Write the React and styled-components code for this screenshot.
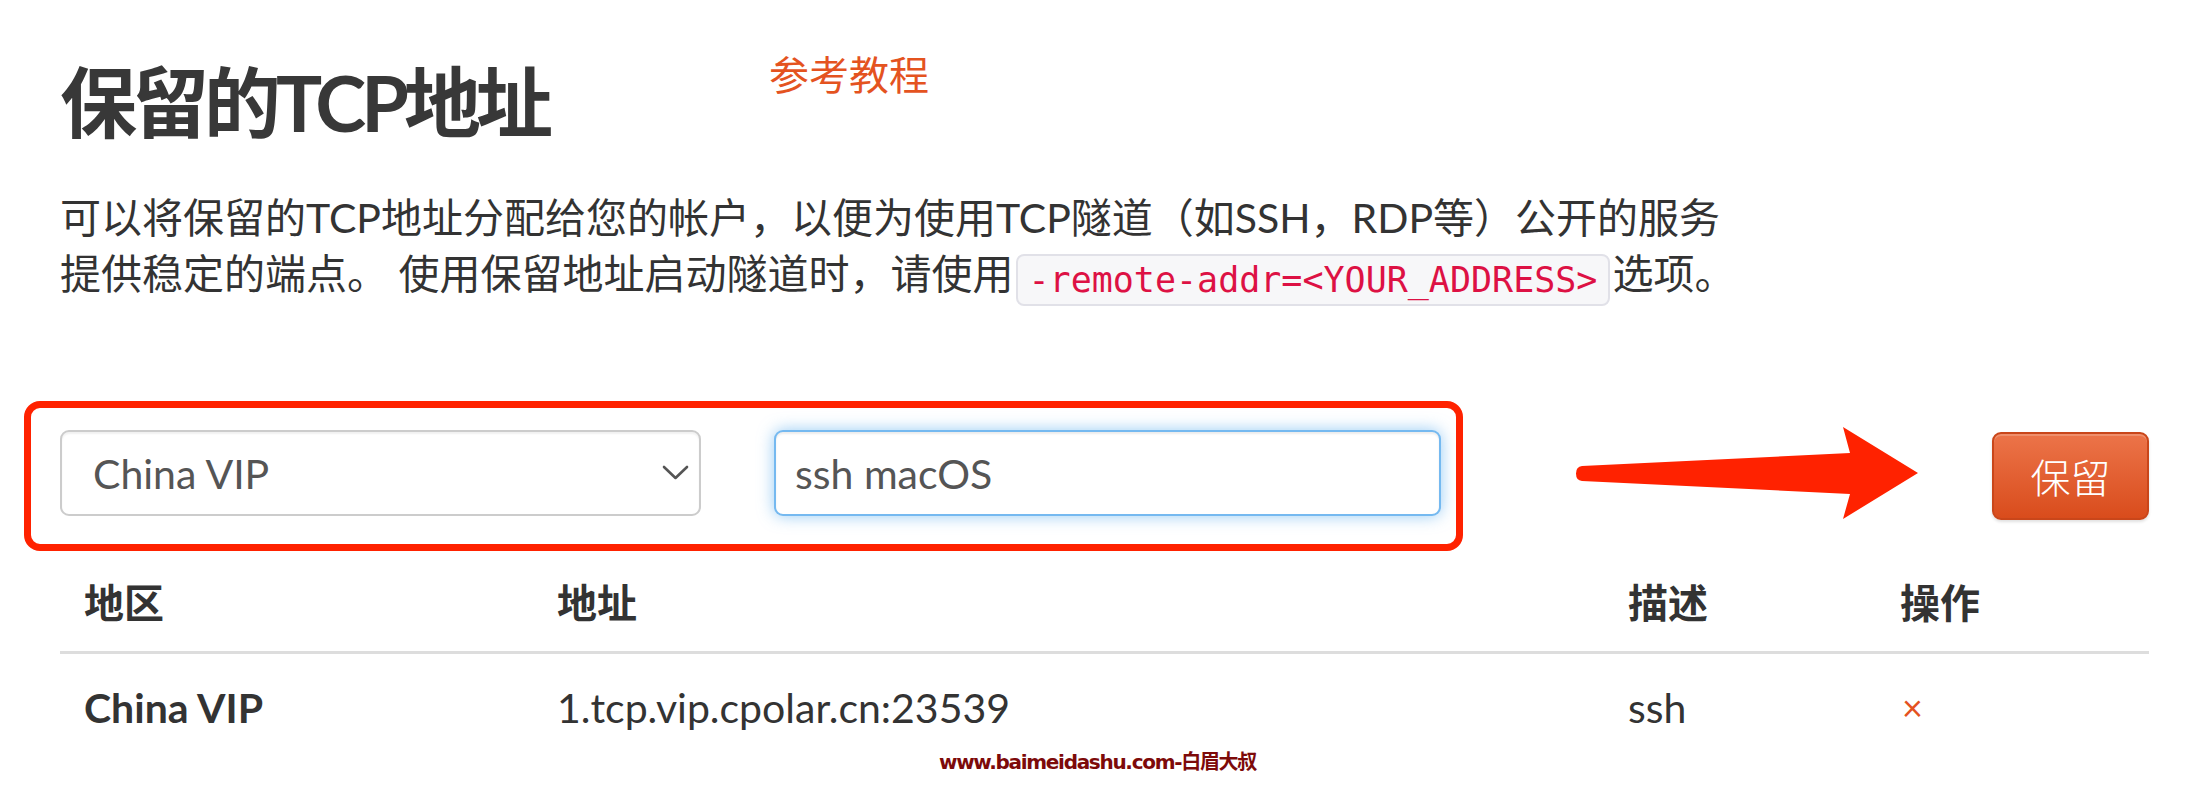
import React from 'react';
import styled, { createGlobalStyle } from 'styled-components';

const TEXT = '#333333';
const ORANGE = '#e4531f';
const LATIN = '"Lato", "Noto Sans CJK SC", sans-serif';

const GlobalStyle = createGlobalStyle`
  html, body {
    margin: 0;
    padding: 0;
    background: #ffffff;
  }
  body {
    font-family: ${LATIN};
    color: ${TEXT};
  }
`;

const Page = styled.div`
  position: relative;
  width: 2195px;
  height: 798px;
  box-sizing: border-box;
  padding: 52px 46px 0 60px;
  overflow: hidden;
`;

const TitleRow = styled.div`
  display: flex;
  align-items: flex-start;
`;

const Title = styled.h1`
  margin: 0;
  font-size: 77px;
  line-height: 100px;
  letter-spacing: -5px;
  font-weight: 700;
  color: #383838;
`;

const TutorialLink = styled.a`
  margin-left: 221px;
  margin-top: -5px;
  font-size: 40px;
  line-height: 56px;
  color: ${ORANGE};
  text-decoration: none;
`;

const Intro = styled.p`
  margin: 38px 0 0;
  font-size: 41px;
  line-height: 56px;
  color: ${TEXT};
`;

const Code = styled.code`
  display: inline-block;
  font-family: "DejaVu Sans Mono", "Liberation Mono", monospace;
  font-size: 35px;
  line-height: 44px;
  padding: 2px 11px;
  margin: 0 2px;
  color: #dd1144;
  background: #f7f7f9;
  border: 2px solid #e1e1e8;
  border-radius: 8px;
  vertical-align: -3px;
`;

const FormRow = styled.div`
  display: flex;
  align-items: center;
  margin-top: 95px;
`;

const Highlight = styled.div`
  display: flex;
  align-items: center;
  gap: 73px;
  margin-left: -36px;
  width: 1439px;
  height: 150px;
  box-sizing: border-box;
  padding: 0 15px 6px 29px;
  border: 7px solid #ff2200;
  border-radius: 16px;
`;

const Field = styled.div`
  width: ${p => p.$width}px;
  height: 86px;
  box-sizing: border-box;
  display: flex;
  align-items: center;
  padding: 0 10px 0 ${p => (p.$focused ? 19 : 31)}px;
  font-size: 41px;
  color: #555555;
  background: #ffffff;
  border: 2px solid ${p => (p.$focused ? 'rgba(82, 168, 236, 0.8)' : '#cccccc')};
  border-radius: 9px;
  box-shadow: ${p =>
    p.$focused
      ? 'inset 0 2px 2px rgba(0,0,0,0.075), 0 0 16px rgba(82, 168, 236, 0.6)'
      : 'inset 0 2px 2px rgba(0,0,0,0.06)'};
`;

const FieldText = styled.span`
  flex: 1;
`;

const Chevron = () => (
  <svg width="27" height="16" viewBox="0 0 27 16" fill="none">
    <path d="M2 2 L13.5 13 L25 2" stroke="#555" strokeWidth="2.6" strokeLinecap="round" strokeLinejoin="round" />
  </svg>
);

const ArrowWrap = styled.div`
  margin-left: 97px;
  width: 380px;
  height: 120px;
  display: flex;
`;

const Arrow = () => (
  <svg width="380" height="120" viewBox="0 0 380 120">
    <path
      d="M22 50 L290 37 L283 11 L358 57 L283 103 L290 78 L22 65 Q16 64.5 16 57.5 Q16 50.5 22 50 Z"
      fill="#ff2200"
    />
  </svg>
);

const SaveButton = styled.button`
  margin-left: 52px;
  width: 157px;
  height: 88px;
  font-family: "Noto Sans CJK SC", sans-serif;
  font-size: 40px;
  font-weight: 300;
  color: #ffffff;
  border: 2px solid #c9461a;
  border-radius: 9px;
  background: linear-gradient(to bottom, #ec7449, #d94c1c);
  box-shadow: inset 0 2px 0 rgba(255,255,255,0.2), 0 2px 3px rgba(0,0,0,0.12);
  cursor: pointer;
`;

const Table = styled.div`
  display: grid;
  grid-template-columns: 473px 1071px 272px 1fr;
`;

const HeadCell = styled.div`
  padding: 0 24px;
  height: 100px;
  display: flex;
  align-items: center;
  font-size: 40px;
  font-weight: 700;
  color: ${TEXT};
  border-bottom: 3px solid #dddddd;
`;

const Cell = styled.div`
  padding: 0 24px;
  height: 106px;
  display: flex;
  align-items: center;
  font-size: 41px;
  font-weight: ${p => (p.$bold ? 700 : 400)};
  color: ${p => (p.$danger ? ORANGE : TEXT)};
`;

const Remove = styled.span`
  font-size: 36px;
  margin-left: 2px;
  cursor: pointer;
`;

const Watermark = styled.div`
  position: absolute;
  left: 0;
  right: 0;
  top: 746px;
  text-align: center;
  font-family: "DejaVu Sans", "Noto Sans CJK SC", sans-serif;
  font-size: 20px;
  font-weight: 700;
  letter-spacing: -1.3px;
  color: #7d0a0a;
`;

export default function App() {
  return (
    <>
      <GlobalStyle />
      <Page>
        <TitleRow>
          <Title>保留的TCP地址</Title>
          <TutorialLink href="#">参考教程</TutorialLink>
        </TitleRow>
        <Intro>
          可以将保留的TCP地址分配给您的帐户，以便为使用TCP隧道（如SSH，RDP等）公开的服务
          <br />
          提供稳定的端点。 使用保留地址启动隧道时，请使用<Code>-remote-addr=&lt;YOUR_ADDRESS&gt;</Code>选项。
        </Intro>
        <FormRow>
          <Highlight>
            <Field $width={641}>
              <FieldText>China VIP</FieldText>
              <Chevron />
            </Field>
            <Field $width={667} $focused>
              <FieldText>ssh macOS</FieldText>
            </Field>
          </Highlight>
          <ArrowWrap>
            <Arrow />
          </ArrowWrap>
          <SaveButton>保留</SaveButton>
        </FormRow>
        <Table>
          <HeadCell>地区</HeadCell>
          <HeadCell>地址</HeadCell>
          <HeadCell>描述</HeadCell>
          <HeadCell>操作</HeadCell>
          <Cell $bold>China VIP</Cell>
          <Cell>1.tcp.vip.cpolar.cn:23539</Cell>
          <Cell>ssh</Cell>
          <Cell $danger>
            <Remove>×</Remove>
          </Cell>
        </Table>
        <Watermark>www.baimeidashu.com-白眉大叔</Watermark>
      </Page>
    </>
  );
}
